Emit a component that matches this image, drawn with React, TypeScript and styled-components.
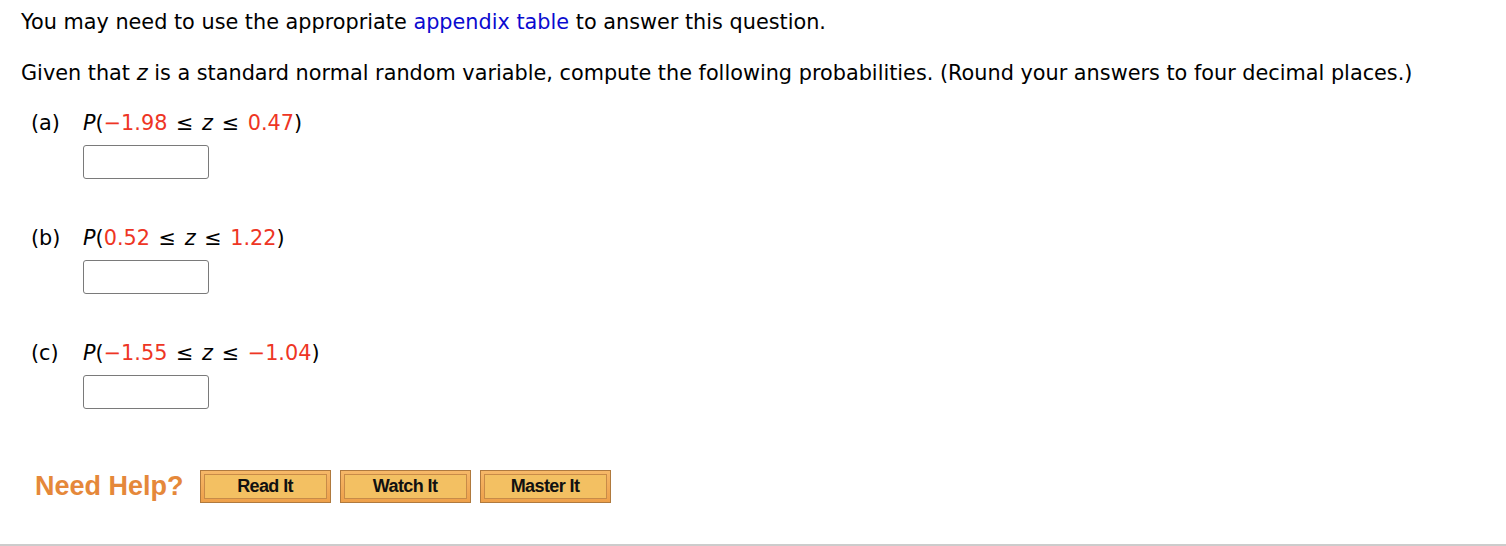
import React from "react";
import styled, { createGlobalStyle } from "styled-components";

const Global = createGlobalStyle`
  html, body { margin: 0; padding: 0; background: #fff; }
  body { font-family: "DejaVu Sans", Verdana, sans-serif; color: #000; }
`;

const Page = styled.div`
  width: 1506px;
  height: 546px;
  box-sizing: border-box;
  border-bottom: 2px solid #cccccc;
  padding: 10px 0 0 21px;
  display: flex;
  flex-direction: column;
`;

const Para = styled.p<{ $gap: number }>`
  margin: 0 0 ${(p) => p.$gap}px 0;
  font-size: 20.8px;
  line-height: 25px;
`;

const Link = styled.a`
  color: #0a0ad0;
  text-decoration: none;
`;

const Var = styled.i`
  font-style: italic;
`;

const Red = styled.span`
  color: #ee3524;
`;

const Rel = styled.span`
  margin: 0 2px;
`;

const Part = styled.div`
  display: flex;
  flex-direction: column;
  margin-bottom: 47px;
`;

const PartHead = styled.div`
  display: flex;
  font-size: 20.8px;
  line-height: 25px;
  padding-left: 10px;
`;

const Label = styled.span`
  width: 52px;
`;

const AnswerBox = styled.input`
  margin: 9px 0 0 62px;
  width: 126px;
  height: 34px;
  box-sizing: border-box;
  border: 1px solid #7a7a7a;
  border-radius: 3px;
  background: #fff;
`;

const HelpRow = styled.div`
  display: flex;
  align-items: center;
  gap: 9px;
  margin-top: 14px;
  padding-left: 14px;
`;

const HelpText = styled.span`
  font-family: "Liberation Sans", Arial, sans-serif;
  font-weight: bold;
  font-size: 27px;
  color: #e5883a;
  margin-right: 7px;
`;

const HelpButton = styled.button`
  width: 131px;
  height: 33px;
  box-sizing: border-box;
  padding: 3px;
  border: 1px solid #b07a3e;
  background: linear-gradient(#f6b868, #eea04a);
  cursor: pointer;
  display: flex;
`;

const ButtonFace = styled.span`
  flex: 1;
  border: 1px solid #c88b48;
  background: #f3c062;
  font-family: "Liberation Sans", Arial, sans-serif;
  font-weight: bold;
  font-size: 18px;
  letter-spacing: -0.6px;
  color: #111;
  display: flex;
  align-items: center;
  justify-content: center;
`;

const parts = [
  { label: "(a)", lo: "\u22121.98", hi: "0.47" },
  { label: "(b)", lo: "0.52", hi: "1.22" },
  { label: "(c)", lo: "\u22121.55", hi: "\u22121.04" },
];

export default function App() {
  return (
    <>
      <Global />
      <Page>
        <Para $gap={26}>
          You may need to use the appropriate <Link href="#">appendix table</Link> to answer this question.
        </Para>
        <Para $gap={25}>
          Given that <Var>z</Var> is a standard normal random variable, compute the following probabilities. (Round your answers to four decimal places.)
        </Para>
        {parts.map((p) => (
          <Part key={p.label}>
            <PartHead>
              <Label>{p.label}</Label>
              <span>
                <Var>P</Var>(<Red>{p.lo}</Red> <Rel>≤</Rel> <Var>z</Var> <Rel>≤</Rel> <Red>{p.hi}</Red>)
              </span>
            </PartHead>
            <AnswerBox type="text" />
          </Part>
        ))}
        <HelpRow>
          <HelpText>Need Help?</HelpText>
          <HelpButton><ButtonFace>Read It</ButtonFace></HelpButton>
          <HelpButton><ButtonFace>Watch It</ButtonFace></HelpButton>
          <HelpButton><ButtonFace>Master It</ButtonFace></HelpButton>
        </HelpRow>
      </Page>
    </>
  );
}
